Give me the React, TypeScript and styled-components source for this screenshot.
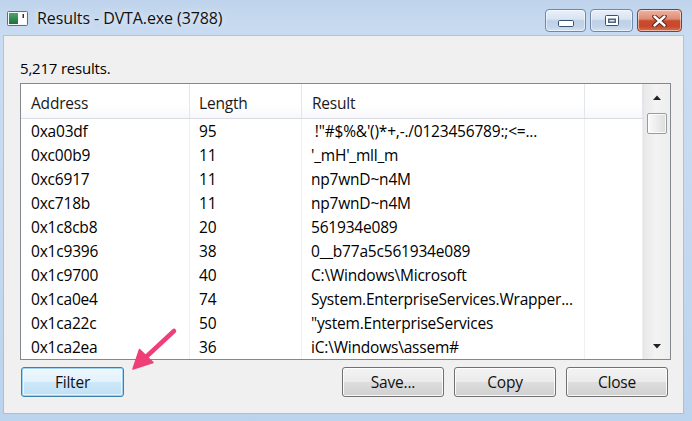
import React from "react";
import styled, { createGlobalStyle } from "styled-components";

const GlobalStyle = createGlobalStyle`
  html, body { margin: 0; padding: 0; }
  body {
    width: 692px; height: 421px; overflow: hidden;
    background: #c6daf0;
    font-family: "Open Sans", "Noto Sans", sans-serif;
    color: #000;
  }
`;

const Window = styled.div`
  position: relative;
  width: 692px;
  height: 421px;
  box-sizing: border-box;
  display: flex;
  flex-direction: column;
  padding: 0 9px 8px 4px;
  background: linear-gradient(180deg, #bfd4ec 0%, #cadcf1 9%, #c4d9f0 55%, #bcd3ee 100%);
`;

const TitleBar = styled.div`
  height: 36px;
  display: flex;
  align-items: center;
  flex-shrink: 0;
`;

const AppIcon = styled.svg`
  margin-left: 3px;
  margin-top: 1px;
  flex-shrink: 0;
`;

const Title = styled.div`
  margin-left: 9px;
  font-size: 16px;
  line-height: 20px;
  color: #111;
  letter-spacing: -0.1px;
  text-shadow: 0 0 6px rgba(255, 255, 255, 0.9);
`;

const CaptionGroup = styled.div`
  margin-left: auto;
  margin-right: 1px;
  align-self: flex-start;
  margin-top: 9px;
  display: flex;
  gap: 4px;
`;

const CaptionButton = styled.div<{ $w: number; $close?: boolean }>`
  width: ${(p) => p.$w}px;
  height: 23px;
  box-sizing: border-box;
  border: 1px solid ${(p) => (p.$close ? "#8c3b29" : "#6f89ab")};
  border-radius: 4px;
  display: flex;
  align-items: center;
  justify-content: center;
  background: ${(p) =>
    p.$close
      ? "linear-gradient(180deg, #eeb3a2 0%, #df8e76 42%, #c94a2d 52%, #c9482c 78%, #d7714f 100%)"
      : "linear-gradient(180deg, #e9f0f9 0%, #d9e5f3 42%, #bed0e7 52%, #c3d5eb 80%, #d3e2f3 100%)"};
  box-shadow: inset 0 0 0 1px rgba(255, 255, 255, 0.5);
`;

const Glyph = styled.svg<{ $down?: number }>`
  display: block;
  margin-top: ${(p) => p.$down ?? 0}px;
`;

const Client = styled.div`
  flex: 1;
  background: #f0f0f0;
  display: flex;
  flex-direction: column;
  padding: 0 12px 16px 16px;
  box-shadow: 0 0 0 1px rgba(150, 175, 205, 0.55);
`;

const CountLabel = styled.div`
  margin-top: 22px;
  font-size: 15px;
  line-height: 20px;
  letter-spacing: -0.2px;
`;

const ListBox = styled.div`
  margin-top: 5px;
  height: 277px;
  box-sizing: border-box;
  border: 1px solid #828790;
  background: #fff;
  display: flex;
  overflow: hidden;
`;

const Table = styled.div`
  flex: 1;
  display: flex;
  flex-direction: column;
  overflow: hidden;
`;

const cols = "169px 112px 283px 1fr";

const HeaderRow = styled.div`
  display: grid;
  grid-template-columns: ${cols};
  height: 35px;
  box-sizing: border-box;
  border-bottom: 1px solid #d9dde3;
  background: linear-gradient(180deg, #ffffff 0%, #ffffff 60%, #f7f8fa 100%);
  flex-shrink: 0;
`;

const HeaderCell = styled.div<{ $indent: number }>`
  padding: 4px 0 0 ${(p) => p.$indent}px;
  line-height: 30px;
  font-size: 15.5px;
  letter-spacing: -0.2px;
  border-right: 1px solid #e3e6ea;
  color: #1a1a1a;
`;

const Row = styled.div`
  display: grid;
  grid-template-columns: ${cols};
  height: 24px;
  flex-shrink: 0;
`;

const Cell = styled.div<{ $indent: number }>`
  padding: 1px 0 0 ${(p) => p.$indent}px;
  line-height: 23px;
  font-size: 15.5px;
  letter-spacing: -0.2px;
  white-space: pre;
  overflow: hidden;
  border-right: 1px solid #eef0f3;
`;

const ScrollBar = styled.div`
  width: 26px;
  flex-shrink: 0;
  display: flex;
  flex-direction: column;
  align-items: center;
  border-left: 1px solid #e4e4e4;
  background: linear-gradient(90deg, #e9e9e9 0%, #f3f3f3 45%, #eeeeee 100%);
`;

const ScrollArrow = styled.div`
  height: 26px;
  width: 100%;
  display: flex;
  align-items: center;
  justify-content: center;
  flex-shrink: 0;
`;

const Thumb = styled.div`
  margin-top: 3px;
  width: 20px;
  height: 21px;
  box-sizing: border-box;
  border: 1px solid #9b9b9b;
  border-radius: 2px;
  background: linear-gradient(90deg, #fafafa 0%, #ececec 50%, #dcdcdc 100%);
  box-shadow: inset 0 0 0 1px rgba(255, 255, 255, 0.8);
`;

const Track = styled.div`
  flex: 1;
`;

const ButtonRow = styled.div`
  margin-top: 7px;
  display: flex;
  align-items: center;
  padding: 0 3px 0 1px;
  gap: 10px;
`;

const PushButton = styled.button<{ $primary?: boolean; $w: number }>`
  width: ${(p) => p.$w}px;
  height: 30px;
  box-sizing: border-box;
  border-radius: 3px;
  font-family: "Open Sans", "Noto Sans", sans-serif;
  font-size: 15.5px;
  letter-spacing: -0.2px;
  color: #111;
  padding: 0;
  border: 1px solid ${(p) => (p.$primary ? "#3c7fb1" : "#707070")};
  background: ${(p) =>
    p.$primary
      ? "linear-gradient(180deg, #eef7fd 0%, #e3f2fc 48%, #cce8f9 52%, #bfe0f6 100%)"
      : "linear-gradient(180deg, #f3f3f3 0%, #ebebeb 48%, #dddddd 52%, #d0d0d0 100%)"};
  box-shadow: ${(p) =>
    p.$primary
      ? "inset 0 0 0 1px #9fd1f0, inset 0 0 0 2px rgba(255,255,255,0.6)"
      : "inset 0 0 0 1px rgba(255,255,255,0.85)"};
`;

const Spacer = styled.div`
  flex: 1;
`;

const Arrow = styled.svg`
  position: absolute;
  left: 125px;
  top: 325px;
  overflow: visible;
  pointer-events: none;
`;

const rows: [string, string, string][] = [
  ["0xa03df", "95", " !\"#$%&'()*+,-./0123456789:;<=..."],
  ["0xc00b9", "11", "'_mH'_mll_m"],
  ["0xc6917", "11", "np7wnD~n4M"],
  ["0xc718b", "11", "np7wnD~n4M"],
  ["0x1c8cb8", "20", "561934e089"],
  ["0x1c9396", "38", "0__b77a5c561934e089"],
  ["0x1c9700", "40", "C:\\Windows\\Microsoft"],
  ["0x1ca0e4", "74", "System.EnterpriseServices.Wrapper..."],
  ["0x1ca22c", "50", "\"ystem.EnterpriseServices"],
  ["0x1ca2ea", "36", "iC:\\Windows\\assem#"],
];

export default function App() {
  return (
    <>
      <GlobalStyle />
      <Window>
        <TitleBar>
          <AppIcon width="21" height="15" viewBox="0 0 21 15">
            <defs>
              <linearGradient id="ig" x1="0" y1="0" x2="0" y2="1">
                <stop offset="0" stopColor="#49a86a" />
                <stop offset="1" stopColor="#1f6e3e" />
              </linearGradient>
            </defs>
            <rect x="0.5" y="0.5" width="20" height="14" rx="1" fill="#f6f6f6" stroke="#6c6c6c" />
            <rect x="2" y="2" width="9" height="11" fill="url(#ig)" />
            <rect x="11" y="2" width="8" height="11" fill="#ffffff" />
            <rect x="15.5" y="3" width="1.5" height="4" fill="#333" />
          </AppIcon>
          <Title>Results - DVTA.exe (3788)</Title>
          <CaptionGroup>
            <CaptionButton $w={41}>
              <Glyph width="16" height="7" viewBox="0 0 16 7" $down={6}>
                <rect x="0.5" y="0.5" width="15" height="6" rx="1.2" fill="#fff" stroke="#3b5170" />
              </Glyph>
            </CaptionButton>
            <CaptionButton $w={43}>
              <Glyph width="14" height="11" viewBox="0 0 14 11">
                <rect x="0.5" y="0.5" width="13" height="10" rx="1" fill="#fff" stroke="#3b5170" />
                <rect x="3" y="3.5" width="8" height="4.5" fill="#4d6585" />
                <rect x="4.5" y="5" width="5" height="1.5" fill="#dfe8f3" />
              </Glyph>
            </CaptionButton>
            <CaptionButton $w={45} $close>
              <Glyph width="15" height="12" viewBox="0 0 15 12">
                <path d="M2.5 1.5 L12.5 10.5 M12.5 1.5 L2.5 10.5" stroke="#5a2015" strokeWidth="4.4" strokeLinecap="round" />
                <path d="M2.5 1.5 L12.5 10.5 M12.5 1.5 L2.5 10.5" stroke="#ffffff" strokeWidth="2.4" strokeLinecap="round" />
              </Glyph>
            </CaptionButton>
          </CaptionGroup>
        </TitleBar>

        <Client>
          <CountLabel>5,217 results.</CountLabel>
          <ListBox>
            <Table>
              <HeaderRow>
                <HeaderCell $indent={10}>Address</HeaderCell>
                <HeaderCell $indent={9}>Length</HeaderCell>
                <HeaderCell $indent={10}>Result</HeaderCell>
                <HeaderCell $indent={0} />
              </HeaderRow>
              {rows.map(([a, l, r]) => (
                <Row key={a}>
                  <Cell $indent={10}>{a}</Cell>
                  <Cell $indent={9}>{l}</Cell>
                  <Cell $indent={9}>{r}</Cell>
                  <Cell $indent={0} />
                </Row>
              ))}
            </Table>
            <ScrollBar>
              <ScrollArrow>
                <svg width="8" height="5" viewBox="0 0 8 5">
                  <path d="M0 5 L4 0.5 L8 5 Z" fill="#222" />
                </svg>
              </ScrollArrow>
              <Thumb />
              <Track />
              <ScrollArrow>
                <svg width="8" height="5" viewBox="0 0 8 5">
                  <path d="M0 0 L4 4.5 L8 0 Z" fill="#222" />
                </svg>
              </ScrollArrow>
            </ScrollBar>
          </ListBox>
          <ButtonRow>
            <PushButton $primary $w={103}>Filter</PushButton>
            <Spacer />
            <PushButton $w={102}>Save...</PushButton>
            <PushButton $w={102}>Copy</PushButton>
            <PushButton $w={102}>Close</PushButton>
          </ButtonRow>
        </Client>

        <Arrow width="60" height="50" viewBox="0 0 60 50">
          <line x1="49" y1="6" x2="21" y2="32" stroke="#ef3f78" strokeWidth="4.5" strokeLinecap="round" />
          <polygon points="8,44 14.5,24.5 28,37.5" fill="#ef3f78" stroke="#ef3f78" strokeWidth="1.5" strokeLinejoin="round" />
        </Arrow>
      </Window>
    </>
  );
}
